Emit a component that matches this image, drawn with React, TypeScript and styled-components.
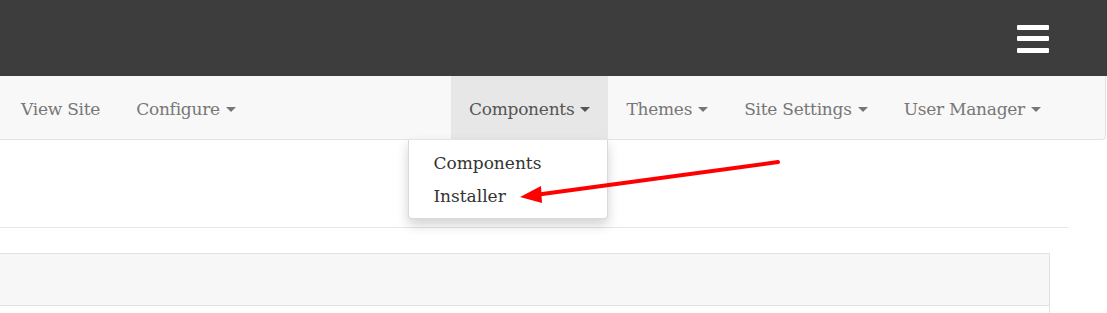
import React from "react";
import styled, { createGlobalStyle } from "styled-components";

const Global = createGlobalStyle`
  html, body { margin: 0; padding: 0; background: #fff; }
  body { font-family: "DejaVu Serif", "Liberation Serif", serif; width: 1107px; height: 313px; overflow: hidden; }
  * { box-sizing: border-box; }
`;

const Page = styled.div`
  position: relative;
  width: 1107px;
  height: 313px;
  overflow: hidden;
`;

const Header = styled.header`
  height: 76px;
  background: #3d3d3d;
  display: flex;
  justify-content: flex-end;
  align-items: center;
  padding-right: 58px;
`;

const Burger = styled.button`
  width: 32px;
  height: 28px;
  padding: 0;
  border: 0;
  background: transparent;
  display: flex;
  flex-direction: column;
  justify-content: space-between;
  margin-top: 1px;
`;

const Bar = styled.span`
  display: block;
  height: 5px;
  width: 32px;
  background: #fff;
  border-radius: 1px;
`;

const Navbar = styled.nav`
  width: 1106px;
  height: 64px;
  background: #f8f8f8;
  border-right: 1px solid #e3e3e3;
  border-bottom: 1px solid #e3e3e3;
  border-bottom-right-radius: 4px;
  display: flex;
  justify-content: space-between;
  padding-left: 3px;
  padding-right: 46px;
`;

const NavGroup = styled.ul`
  display: flex;
  margin: 0;
  padding: 0;
  list-style: none;
`;

const NavItem = styled.li<{ $active?: boolean }>`
  position: relative;
  display: flex;
  align-items: center;
  height: 63px;
  padding: 2px 18px 0;
  background: ${(p) => (p.$active ? "#e7e7e7" : "transparent")};
  color: ${(p) => (p.$active ? "#555" : "#777")};
  font-size: 17px;
  letter-spacing: -0.25px;
  white-space: nowrap;
`;

const Caret = styled.span`
  display: inline-block;
  width: 0;
  height: 0;
  margin-left: 6px;
  margin-top: 1px;
  border-top: 5px solid currentColor;
  border-left: 5px solid transparent;
  border-right: 5px solid transparent;
`;

const Dropdown = styled.ul`
  position: absolute;
  top: 63px;
  right: 0;
  width: 200px;
  margin: 0;
  padding: 6px 0;
  list-style: none;
  background: #fff;
  border: 1px solid rgba(0, 0, 0, 0.15);
  border-top-color: #e3e3e3;
  border-radius: 0 0 4px 4px;
  box-shadow: 0 6px 12px rgba(0, 0, 0, 0.175);
  z-index: 5;
  letter-spacing: 0;
`;

const DropItem = styled.li`
  height: 33px;
  display: flex;
  align-items: center;
  padding: 0 24px;
  color: #333;
  font-size: 17px;
`;

const Content = styled.main`
  padding-top: 87px;
`;

const Rule = styled.hr`
  width: 1068px;
  height: 0;
  margin: 0;
  border: 0;
  border-top: 1px solid #e6e6e6;
`;

const Panel = styled.section`
  margin-top: 25px;
  margin-left: -1px;
  width: 1051px;
  height: 80px;
  border: 1px solid #e2e2e2;
  border-bottom: 0;
`;

const PanelHeading = styled.div`
  height: 52px;
  background: #f7f7f7;
  border-bottom: 1px solid #e2e2e2;
`;

const Arrow = styled.svg`
  position: absolute;
  left: 0;
  top: 0;
  pointer-events: none;
  z-index: 10;
`;

export default function App() {
  return (
    <Page>
      <Global />
      <Header>
        <Burger aria-label="menu">
          <Bar />
          <Bar />
          <Bar />
        </Burger>
      </Header>
      <Navbar>
        <NavGroup>
          <NavItem>View Site</NavItem>
          <NavItem>
            Configure<Caret />
          </NavItem>
        </NavGroup>
        <NavGroup>
          <NavItem $active>
            Components<Caret />
            <Dropdown>
              <DropItem>Components</DropItem>
              <DropItem>Installer</DropItem>
            </Dropdown>
          </NavItem>
          <NavItem>
            Themes<Caret />
          </NavItem>
          <NavItem>
            Site Settings<Caret />
          </NavItem>
          <NavItem>
            User Manager<Caret />
          </NavItem>
        </NavGroup>
      </Navbar>
      <Content>
        <Rule />
        <Panel>
          <PanelHeading />
        </Panel>
      </Content>
      <Arrow width="1107" height="313" viewBox="0 0 1107 313">
        <line x1="778" y1="162" x2="535" y2="195" stroke="#ff0000" strokeWidth="4" strokeLinecap="round" />
        <polygon points="520,197 541,186 542,203" fill="#ff0000" />
      </Arrow>
    </Page>
  );
}
